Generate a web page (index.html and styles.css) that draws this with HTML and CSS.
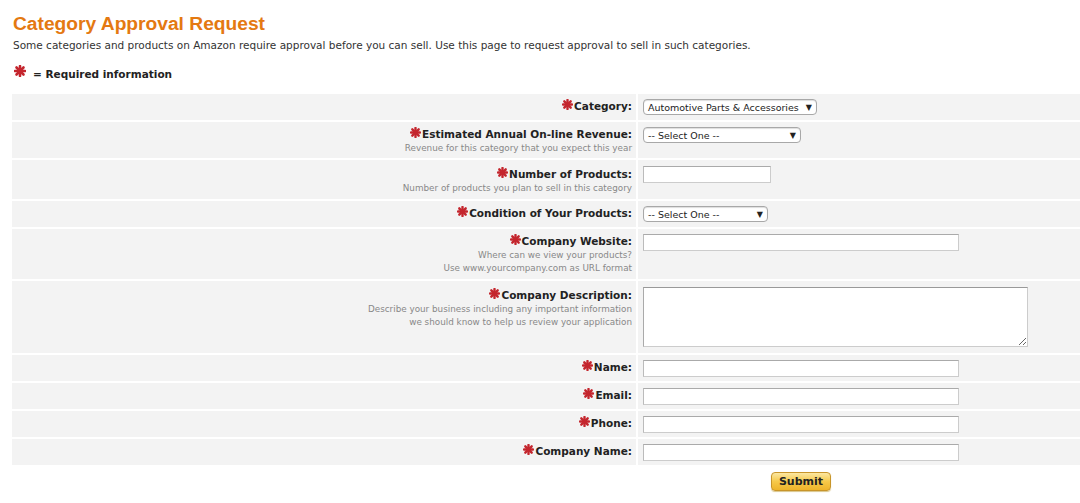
FILE: index.html
```html
<!DOCTYPE html>
<html lang="en">
<head>
  <meta charset="UTF-8" />
  <title>Category Approval Request</title>
  <link rel="stylesheet" href="styles.css">
</head>
<body>

  <h1 class="title">Category Approval Request</h1>
  <p class="intro">Some categories and products on Amazon require approval before you can sell. Use this page to request approval to sell in such categories.</p>
  <p class="required-note"><span class="req big"><svg viewBox="0 0 12 12"><g stroke="#c4262e" stroke-width="2.6" stroke-linecap="round"><line x1="6" y1="1" x2="6" y2="11"/><line x1="1" y1="6" x2="11" y2="6"/><line x1="2.5" y1="2.5" x2="9.5" y2="9.5"/><line x1="9.5" y1="2.5" x2="2.5" y2="9.5"/></g></svg></span>= Required information</p>

  <form class="approval-form">
    <table class="form-table">
      <tr class="row-short">
        <td class="label-cell"><span class="label"><span class="req"><svg viewBox="0 0 12 12"><g stroke="#c4262e" stroke-width="2.6" stroke-linecap="round"><line x1="6" y1="1" x2="6" y2="11"/><line x1="1" y1="6" x2="11" y2="6"/><line x1="2.5" y1="2.5" x2="9.5" y2="9.5"/><line x1="9.5" y1="2.5" x2="2.5" y2="9.5"/></g></svg></span>Category:</span></td>
        <td class="field-cell"><div class="select select-category">Automotive Parts &amp; Accessories <span class="arrow">▼</span></div></td>
      </tr>
      <tr>
        <td class="label-cell"><span class="label"><span class="req"><svg viewBox="0 0 12 12"><g stroke="#c4262e" stroke-width="2.6" stroke-linecap="round"><line x1="6" y1="1" x2="6" y2="11"/><line x1="1" y1="6" x2="11" y2="6"/><line x1="2.5" y1="2.5" x2="9.5" y2="9.5"/><line x1="9.5" y1="2.5" x2="2.5" y2="9.5"/></g></svg></span>Estimated Annual On-line Revenue:</span>
          <span class="hint">Revenue for this category that you expect this year</span></td>
        <td class="field-cell"><div class="select select-one">-- Select One -- <span class="arrow">▼</span></div></td>
      </tr>
      <tr class="row-products">
        <td class="label-cell"><span class="label"><span class="req"><svg viewBox="0 0 12 12"><g stroke="#c4262e" stroke-width="2.6" stroke-linecap="round"><line x1="6" y1="1" x2="6" y2="11"/><line x1="1" y1="6" x2="11" y2="6"/><line x1="2.5" y1="2.5" x2="9.5" y2="9.5"/><line x1="9.5" y1="2.5" x2="2.5" y2="9.5"/></g></svg></span>Number of Products:</span>
          <span class="hint">Number of products you plan to sell in this category</span></td>
        <td class="field-cell"><input type="text" class="text-input small" /></td>
      </tr>
      <tr class="row-short">
        <td class="label-cell"><span class="label"><span class="req"><svg viewBox="0 0 12 12"><g stroke="#c4262e" stroke-width="2.6" stroke-linecap="round"><line x1="6" y1="1" x2="6" y2="11"/><line x1="1" y1="6" x2="11" y2="6"/><line x1="2.5" y1="2.5" x2="9.5" y2="9.5"/><line x1="9.5" y1="2.5" x2="2.5" y2="9.5"/></g></svg></span>Condition of Your Products:</span></td>
        <td class="field-cell"><div class="select select-condition">-- Select One -- <span class="arrow">▼</span></div></td>
      </tr>
      <tr class="row-website">
        <td class="label-cell"><span class="label"><span class="req"><svg viewBox="0 0 12 12"><g stroke="#c4262e" stroke-width="2.6" stroke-linecap="round"><line x1="6" y1="1" x2="6" y2="11"/><line x1="1" y1="6" x2="11" y2="6"/><line x1="2.5" y1="2.5" x2="9.5" y2="9.5"/><line x1="9.5" y1="2.5" x2="2.5" y2="9.5"/></g></svg></span>Company Website:</span>
          <span class="hint">Where can we view your products?</span>
          <span class="hint">Use www.yourcompany.com as URL format</span></td>
        <td class="field-cell"><input type="text" class="text-input" /></td>
      </tr>
      <tr class="row-desc">
        <td class="label-cell"><span class="label"><span class="req"><svg viewBox="0 0 12 12"><g stroke="#c4262e" stroke-width="2.6" stroke-linecap="round"><line x1="6" y1="1" x2="6" y2="11"/><line x1="1" y1="6" x2="11" y2="6"/><line x1="2.5" y1="2.5" x2="9.5" y2="9.5"/><line x1="9.5" y1="2.5" x2="2.5" y2="9.5"/></g></svg></span>Company Description:</span>
          <span class="hint">Describe your business including any important information</span>
          <span class="hint">we should know to help us review your application</span></td>
        <td class="field-cell"><textarea class="text-area"></textarea></td>
      </tr>
      <tr class="row-short">
        <td class="label-cell"><span class="label"><span class="req"><svg viewBox="0 0 12 12"><g stroke="#c4262e" stroke-width="2.6" stroke-linecap="round"><line x1="6" y1="1" x2="6" y2="11"/><line x1="1" y1="6" x2="11" y2="6"/><line x1="2.5" y1="2.5" x2="9.5" y2="9.5"/><line x1="9.5" y1="2.5" x2="2.5" y2="9.5"/></g></svg></span>Name:</span></td>
        <td class="field-cell"><input type="text" class="text-input" /></td>
      </tr>
      <tr class="row-short">
        <td class="label-cell"><span class="label"><span class="req"><svg viewBox="0 0 12 12"><g stroke="#c4262e" stroke-width="2.6" stroke-linecap="round"><line x1="6" y1="1" x2="6" y2="11"/><line x1="1" y1="6" x2="11" y2="6"/><line x1="2.5" y1="2.5" x2="9.5" y2="9.5"/><line x1="9.5" y1="2.5" x2="2.5" y2="9.5"/></g></svg></span>Email:</span></td>
        <td class="field-cell"><input type="text" class="text-input" /></td>
      </tr>
      <tr class="row-short">
        <td class="label-cell"><span class="label"><span class="req"><svg viewBox="0 0 12 12"><g stroke="#c4262e" stroke-width="2.6" stroke-linecap="round"><line x1="6" y1="1" x2="6" y2="11"/><line x1="1" y1="6" x2="11" y2="6"/><line x1="2.5" y1="2.5" x2="9.5" y2="9.5"/><line x1="9.5" y1="2.5" x2="2.5" y2="9.5"/></g></svg></span>Phone:</span></td>
        <td class="field-cell"><input type="text" class="text-input" /></td>
      </tr>
      <tr class="row-short">
        <td class="label-cell"><span class="label"><span class="req"><svg viewBox="0 0 12 12"><g stroke="#c4262e" stroke-width="2.6" stroke-linecap="round"><line x1="6" y1="1" x2="6" y2="11"/><line x1="1" y1="6" x2="11" y2="6"/><line x1="2.5" y1="2.5" x2="9.5" y2="9.5"/><line x1="9.5" y1="2.5" x2="2.5" y2="9.5"/></g></svg></span>Company Name:</span></td>
        <td class="field-cell"><input type="text" class="text-input" /></td>
      </tr>
    </table>

    <div class="submit-row">
      <button type="button" class="submit-btn">Submit</button>
    </div>
  </form>

</body>
</html>
```

FILE: styles.css
```css
body {
  margin: 0 0 0 12px;
  font-family: "DejaVu Sans", Verdana, sans-serif;
  color: #222;
  background: #fff;
}
.title {
  margin: 0 0 0 1px;
  padding-top: 13px;
  font-family: "Liberation Sans", Arial, sans-serif;
  font-size: 19.2px;
  line-height: 22px;
  font-weight: bold;
  color: #e47911;
}
.intro {
  margin: 3px 0 0 1px;
  font-size: 10.5px;
  line-height: 14px;
  color: #333;
}
.required-note {
  display: flex;
  align-items: flex-start;
  margin: 15px 0 0 2px;
  font-size: 10.5px;
  font-weight: bold;
  line-height: 14px;
}
.req {
  display: block;
  flex: none;
  width: 11px;
  height: 11px;
  margin: 0 1px 0 0;
}
.req svg {
  display: block;
  width: 100%;
  height: 100%;
}
.req.big {
  width: 12px;
  height: 12px;
  margin: -2px 7px 0 0;
}

.approval-form {
  margin-top: 13px;
}
.form-table {
  width: 100%;
  border-collapse: separate;
  border-spacing: 0 2px;
  margin-top: -2px;
}
.form-table td {
  background: #f3f3f3;
  vertical-align: top;
}
.label-cell {
  width: 620px;
  padding: 5px 4px 3px 0;
  text-align: right;
  border-right: 2px solid #fff;
}
.row-short .label-cell {
  padding-bottom: 6px;
}
.row-products .label-cell {
  padding-top: 7px;
  padding-bottom: 4px;
}
.row-website .label-cell {
  padding-bottom: 4px;
}
.row-desc .label-cell {
  padding-top: 7px;
}
.field-cell {
  padding: 5px 5px 4px;
}
.row-products .field-cell,
.row-desc .field-cell {
  padding-top: 6px;
}
.label {
  display: flex;
  justify-content: flex-end;
  align-items: flex-start;
  font-size: 10.5px;
  line-height: 15px;
  font-weight: bold;
  color: #222;
}
.hint {
  display: block;
  font-size: 8.8px;
  line-height: 13px;
  color: #888;
}

.select {
  display: flex;
  align-items: center;
  box-sizing: border-box;
  height: 16px;
  padding: 0 4px;
  font-size: 9.5px;
  color: #222;
  background: #fff;
  border: 1px solid #a8a8a8;
  border-radius: 4px;
  box-shadow: inset 0 1px 1px #ddd;
}
.select .arrow {
  margin-left: auto;
  font-size: 8px;
}
.select-category { width: 174px; }
.select-one { width: 158px; }
.select-condition { width: 125px; }

.text-input {
  display: block;
  box-sizing: border-box;
  width: 316px;
  height: 17px;
  margin: 0;
  padding: 0 2px;
  background: #fff;
  border: 1px solid #ccc;
  border-top-color: #aaa;
  border-left-color: #bbb;
  font-size: 11px;
}
.text-input.small { width: 128px; }
.text-area {
  display: block;
  box-sizing: border-box;
  width: 385px;
  height: 60px;
  margin: 0 0 2px;
  padding: 2px;
  background: #fff;
  border: 1px solid #ccc;
  border-top-color: #999;
  border-left-color: #aaa;
}

.submit-row {
  height: 31px;
  padding: 5px 0 0 759px;
  border-bottom: 1px solid #eee;
}
.submit-btn {
  display: block;
  width: 60px;
  height: 19px;
  padding: 0;
  font-family: "DejaVu Sans", Verdana, sans-serif;
  font-size: 11px;
  font-weight: bold;
  color: #222;
  background: linear-gradient(#fbe7a1, #f6c94a 50%, #eeb42a);
  border: 1px solid #c8952a;
  border-radius: 4px;
  box-shadow: 0 1px 1px #d9c58a;
  cursor: pointer;
}
```
